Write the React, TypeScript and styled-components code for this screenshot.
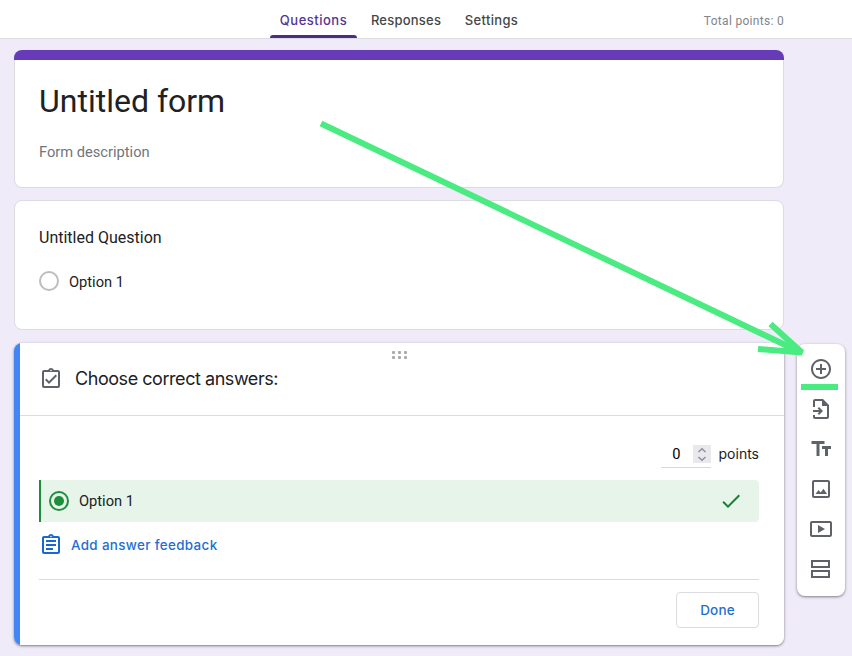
import React from "react";
import styled, { createGlobalStyle } from "styled-components";

const GlobalStyle = createGlobalStyle`
  *, *::before, *::after { box-sizing: border-box; }
  html, body { margin: 0; background: #f0ebf8; }
  body { height: 656px; overflow: hidden; font-family: Roboto, "Liberation Sans", sans-serif; color: #202124; }
  svg { display: block; flex: none; }
`;

const geometric = `Inter, "Open Sans", sans-serif`;

const Page = styled.div`
  position: relative;
  width: 852px;
  height: 656px;
  overflow: hidden;
`;

const TopBar = styled.header`
  display: grid;
  grid-template-columns: 270px 1fr auto;
  height: 39px;
  padding-right: 68px;
  background: #fff;
  border-bottom: 1px solid #dadce0;
`;

const Tabs = styled.nav`
  grid-column: 2;
  display: flex;
  gap: 4px;
`;

const Tab = styled.a<{ $active?: boolean; $width: number; $spacing: number }>`
  display: flex;
  flex-direction: column;
  align-items: center;
  justify-content: space-between;
  width: ${(p) => p.$width}px;
  padding-top: 11px;
  font: 500 13px/18px ${geometric};
  letter-spacing: ${(p) => p.$spacing}px;
  white-space: nowrap;
  color: ${(p) => (p.$active ? "#533494" : "#444746")};
  &::after {
    content: "";
    width: 100%;
    height: 3px;
    border-radius: 3px 3px 0 0;
    background: ${(p) => (p.$active ? "#4b2e83" : "transparent")};
  }
`;

const Total = styled.div`
  padding-top: 13px;
  font-size: 12px;
  line-height: 16px;
  letter-spacing: 0.3px;
  color: #80868b;
`;

const Workspace = styled.main`
  display: grid;
  grid-template-columns: 770px 48px;
  column-gap: 13px;
  align-items: start;
  padding: 11px 0 0 14px;
`;

const Column = styled.div`
  display: flex;
  flex-direction: column;
`;

const Card = styled.section`
  background: #fff;
  border: 1px solid #dadce0;
  border-radius: 8px;
  padding: 0 24px;
`;

const TitleCard = styled(Card)`
  height: 138px;
  padding: 0;
  border-top: 0;
  margin-bottom: 12px;
`;

const Banner = styled.div`
  height: 10px;
  margin: 0 -1px;
  border-radius: 8px 8px 0 0;
  background: #673ab7;
`;

const FormTitle = styled.h1`
  margin: 21px 24px 0;
  font-size: 32px;
  font-weight: 400;
  line-height: 40px;
`;

const Description = styled.p`
  margin: 21px 24px 0;
  font-size: 14.67px;
  line-height: 20px;
  color: #70757a;
`;

const QuestionCard = styled(Card)`
  height: 130px;
  margin-bottom: 13px;
`;

const QuestionTitle = styled.h2`
  margin: 25px 0 0;
  font-size: 16px;
  font-weight: 400;
  line-height: 24px;
`;

const Choice = styled.div`
  display: flex;
  gap: 10px;
  margin-top: 21px;
  font-size: 14.67px;
  line-height: 22px;
`;

const Radio = styled.span<{ $checked?: boolean }>`
  display: grid;
  place-items: center;
  width: 20px;
  height: 20px;
  border: 2px solid ${(p) => (p.$checked ? "#1e8e3e" : "#bdbdbd")};
  border-radius: 50%;
  &::after {
    content: "";
    width: 10px;
    height: 10px;
    border-radius: 50%;
    background: ${(p) => (p.$checked ? "#1e8e3e" : "transparent")};
  }
`;

const AnswerCard = styled.section`
  height: 302px;
  padding-left: 6px;
  background: linear-gradient(to right, #4285f4 6px, #fff 6px);
  border-radius: 8px;
  box-shadow: 0 1px 2px rgba(0, 0, 0, 0.35), 0 1px 3px 1px rgba(0, 0, 0, 0.12);
`;

const AnswerHeader = styled.div`
  display: flex;
  flex-direction: column;
  height: 73px;
  border-bottom: 1px solid #dadce0;
`;

const Grip = styled.div`
  display: grid;
  grid-template-columns: repeat(3, 3px);
  gap: 2px 3px;
  margin: 8px 0 0 372px;
`;

const Dot = styled.i`
  width: 3px;
  height: 3px;
  border-radius: 1px;
  background: #aaa;
`;

const HeaderLine = styled.div`
  display: flex;
  align-items: center;
  gap: 12px;
  margin: 8px 0 0 19px;
  font: 400 18px/24px ${geometric};
  letter-spacing: -0.45px;
`;

const AnswerBody = styled.div`
  display: flex;
  flex-direction: column;
  padding: 26px 25px 0 19px;
`;

const PointsRow = styled.div`
  display: flex;
  justify-content: flex-end;
  gap: 8px;
  font: 400 14px/24px ${geometric};
`;

const PointsField = styled.div`
  display: flex;
  align-items: center;
  justify-content: flex-end;
  gap: 12px;
  width: 50px;
  height: 26px;
  padding-bottom: 1px;
  border-bottom: 1px solid #d5d7da;
  font: 400 14.67px/24px Roboto, sans-serif;
  color: #000;
`;

const Spinner = styled.span`
  display: grid;
  place-items: center;
  width: 18px;
  height: 18px;
  background: #e9e9ed;
`;

const CorrectAnswer = styled.div`
  display: flex;
  align-items: center;
  height: 42px;
  margin-top: 12px;
  padding: 0 16px 0 8px;
  gap: 10px;
  border-left: 2px solid #1e8e3e;
  border-radius: 0 4px 4px 0;
  background: #e6f4ea;
  font-size: 14.67px;
  svg { margin-left: auto; }
`;

const Feedback = styled.a`
  display: flex;
  align-items: center;
  gap: 8px;
  height: 24px;
  margin-top: 11px;
  font: 500 13.4px/20px ${geometric};
  letter-spacing: 0.35px;
  color: #1f6fd0;
`;

const Footer = styled.div`
  display: flex;
  justify-content: flex-end;
  margin-top: 22px;
  padding-top: 12px;
  border-top: 1px solid #dadce0;
`;

const DoneButton = styled.button`
  width: 83px;
  height: 36px;
  padding: 0;
  border: 1px solid #dadce0;
  border-radius: 4px;
  background: #fff;
  font: 500 13.5px/20px ${geometric};
  letter-spacing: 0.2px;
  color: #1f6fd0;
`;

const Toolbar = styled.aside`
  display: flex;
  flex-direction: column;
  height: 252px;
  margin-top: 294px;
  padding-top: 5px;
  background: #fff;
  border-radius: 8px;
  box-shadow: 0 1px 2px rgba(0, 0, 0, 0.32), 0 1px 3px 1px rgba(0, 0, 0, 0.12);
`;

const Tool = styled.button`
  display: grid;
  place-items: center;
  height: 40px;
  padding: 0;
  border: 0;
  background: none;
  color: #5f6368;
`;

const Annotation = styled.svg`
  position: absolute;
  inset: 0;
  pointer-events: none;
`;

const Icon = ({ children, color = "currentColor" }: { children: React.ReactNode; color?: string }) => (
  <svg width="24" height="24" viewBox="0 0 24 24" fill={color}>{children}</svg>
);

const Clipboard = ({ children, color }: { children: React.ReactNode; color: string }) => (
  <svg width="24" height="24" viewBox="0 0 24 24" fill={color}>
    <path fillRule="evenodd" d="M19 3h-4.18C14.4 1.84 13.3 1 12 1s-2.4.84-2.82 2H5c-1.1 0-2 .9-2 2v14c0 1.1.9 2 2 2h14c1.1 0 2-.9 2-2V5c0-1.1-.9-2-2-2zM12 2.75a.75.75 0 1 1 0 1.5.75.75 0 0 1 0-1.5zM19 19H5V5h14z" />
    {children}
  </svg>
);

const tools: { label: string; shape: React.ReactNode }[] = [
  {
    label: "Add question",
    shape: <path d="M13 7h-2v4H7v2h4v4h2v-4h4v-2h-4V7zm-1-5C6.48 2 2 6.48 2 12s4.48 10 10 10 10-4.48 10-10S17.52 2 12 2zm0 18c-4.41 0-8-3.59-8-8s3.59-8 8-8 8 3.59 8 8-3.59 8-8 8z" />,
  },
  {
    label: "Import questions",
    shape: <path d="M14 2H6c-1.1 0-2 .9-2 2v6h2V4h7v5h5v11H6v-2H4v2c0 1.1.9 2 2 2h12c1.1 0 2-.9 2-2V8l-6-6zM4 13v2h6.2l-1.6 1.6L10 18l4-4-4-4-1.4 1.4 1.6 1.6H4z" />,
  },
  { label: "Add title", shape: <path d="M2.500 4v3h5v12h3V7h5V4h-13zm19.500 5h-9v3h3v7h3v-7h3V9z" /> },
  {
    label: "Add image",
    shape: <path d="M19 5v14H5V5h14m0-2H5c-1.1 0-2 .9-2 2v14c0 1.1.9 2 2 2h14c1.1 0 2-.9 2-2V5c0-1.1-.9-2-2-2zM6.500 17l3-4 2.200 2.600 2.800-3.800 3.500 5.200z" />,
  },
  {
    label: "Add video",
    shape: <path fillRule="evenodd" d="M21 4H3c-1.1 0-2 .9-2 2v12c0 1.1.9 2 2 2h18c1.1 0 2-.9 2-2V6c0-1.1-.9-2-2-2zm0 14H3V6h18zM9 8v8l7-4z" />,
  },
  {
    label: "Add section",
    shape: <path fillRule="evenodd" d="M2 3v8h19V3zm2 2h15v4H4zM2 13v8h19v-8zm2 2h15v4H4z" />,
  },
];

export default function App() {
  return (
    <Page>
      <GlobalStyle />
      <TopBar>
        <Tabs>
          <Tab $active $width={87} $spacing={0.5}>Questions</Tab>
          <Tab $width={90} $spacing={0.22}>Responses</Tab>
          <Tab $width={73} $spacing={0.35}>Settings</Tab>
        </Tabs>
        <Total>Total points: 0</Total>
      </TopBar>
      <Workspace>
        <Column>
          <TitleCard>
            <Banner />
            <FormTitle>Untitled form</FormTitle>
            <Description>Form description</Description>
          </TitleCard>
          <QuestionCard>
            <QuestionTitle>Untitled Question</QuestionTitle>
            <Choice><Radio />Option 1</Choice>
          </QuestionCard>
          <AnswerCard>
            <AnswerHeader>
              <Grip>{Array.from({ length: 6 }, (_, i) => <Dot key={i} />)}</Grip>
              <HeaderLine>
                <Clipboard color="#5f6368">
                  <path d="M7.4 11.6L6 13l4 4 8-8-1.4-1.4-6.6 6.6z" />
                </Clipboard>
                Choose correct answers:
              </HeaderLine>
            </AnswerHeader>
            <AnswerBody>
              <PointsRow>
                <PointsField>
                  0
                  <Spinner>
                    <svg width="10" height="15" viewBox="0 0 10 15" fill="none" stroke="#8f8f9d" strokeWidth="1.5">
                      <path d="M1.5 5L5 1.7 8.5 5M1.5 10L5 13.3 8.5 10" />
                    </svg>
                  </Spinner>
                </PointsField>
                points
              </PointsRow>
              <CorrectAnswer>
                <Radio $checked />
                Option 1
                <Icon color="#188038"><path d="M9 16.17L4.83 12l-1.42 1.41L9 19 21 7l-1.41-1.41z" /></Icon>
              </CorrectAnswer>
              <Feedback>
                <Clipboard color="#1967d2">
                  <path d="M7 7h10v2H7zM7 11h10v2H7zM7 15h7v2H7z" />
                </Clipboard>
                Add answer feedback
              </Feedback>
              <Footer><DoneButton>Done</DoneButton></Footer>
            </AnswerBody>
          </AnswerCard>
        </Column>
        <Toolbar>
          {tools.map((tool) => (
            <Tool key={tool.label} aria-label={tool.label}><Icon>{tool.shape}</Icon></Tool>
          ))}
        </Toolbar>
      </Workspace>
      <Annotation width="852" height="656" viewBox="0 0 852 656" fill="none" stroke="#4aeb80" strokeWidth="6" strokeLinejoin="bevel">
        <path d="M321 123.500L801 352.500M770.500 324L802 352.500L758 349M801 387H838" />
      </Annotation>
    </Page>
  );
}
